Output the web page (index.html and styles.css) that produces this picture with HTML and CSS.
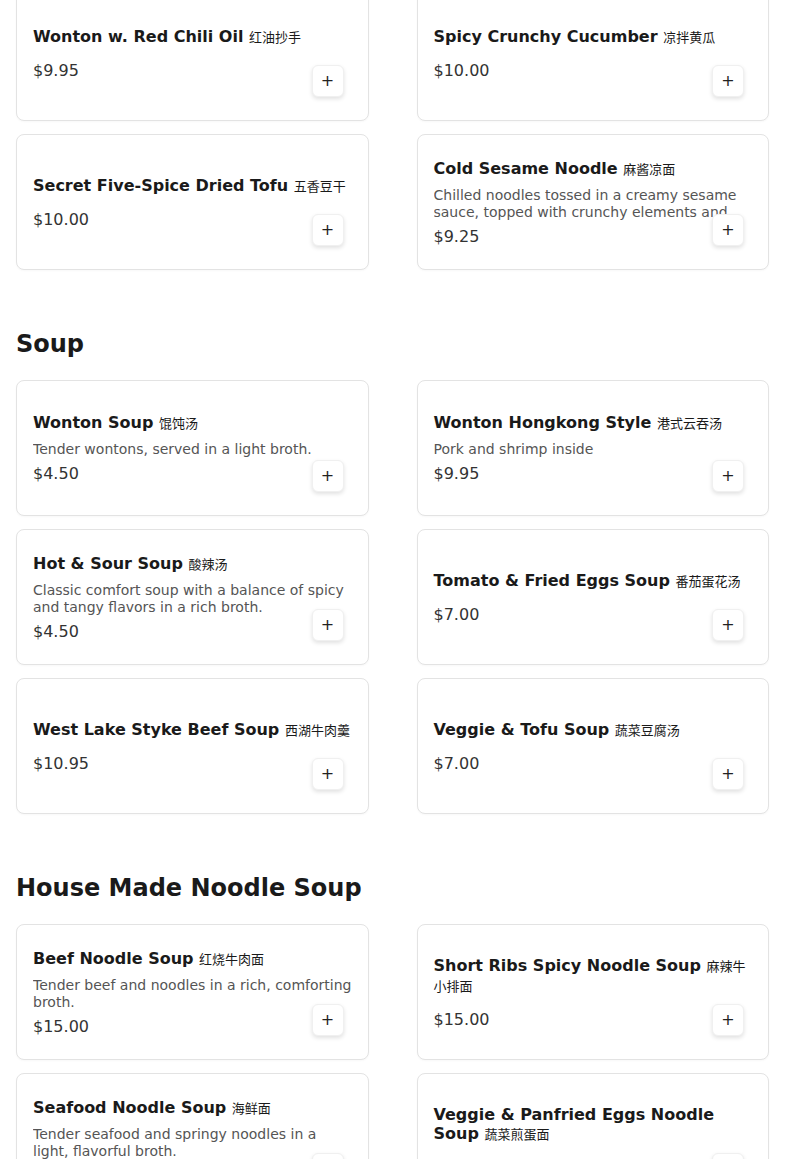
FILE: index.html
```html
<!DOCTYPE html>
<html lang="en">
<head>
    <meta charset="UTF-8">
    <meta name="viewport" content="width=device-width, initial-scale=1.0">
    <title>Menu</title>
    <link rel="stylesheet" href="styles.css">
</head>
<body>
    <main class="menu">
        <section class="menu-section">
            <div class="item-grid">
                <div class="item-card">
                    <div class="item-info">
                        <h3 class="item-name">Wonton w. Red Chili Oil <span class="name-cn">红油抄手</span></h3>
                        <p class="item-price">$9.95</p>
                    </div>
                    <button class="btn-add">+</button>
                </div>
                <div class="item-card">
                    <div class="item-info">
                        <h3 class="item-name">Spicy Crunchy Cucumber <span class="name-cn">凉拌黄瓜</span></h3>
                        <p class="item-price">$10.00</p>
                    </div>
                    <button class="btn-add">+</button>
                </div>
                <div class="item-card">
                    <div class="item-info">
                        <h3 class="item-name">Secret Five-Spice Dried Tofu <span class="name-cn">五香豆干</span></h3>
                        <p class="item-price">$10.00</p>
                    </div>
                    <button class="btn-add">+</button>
                </div>
                <div class="item-card">
                    <div class="item-info">
                        <h3 class="item-name">Cold Sesame Noodle <span class="name-cn">麻酱凉面</span></h3>
                        <p class="item-desc">Chilled noodles tossed in a creamy sesame sauce, topped with crunchy elements and fresh cucumber.</p>
                        <p class="item-price">$9.25</p>
                    </div>
                    <button class="btn-add">+</button>
                </div>
            </div>
        </section>

        <section class="menu-section">
            <h2 class="section-title">Soup</h2>
            <div class="item-grid">
                <div class="item-card">
                    <div class="item-info">
                        <h3 class="item-name">Wonton Soup <span class="name-cn">馄饨汤</span></h3>
                        <p class="item-desc">Tender wontons, served in a light broth.</p>
                        <p class="item-price">$4.50</p>
                    </div>
                    <button class="btn-add">+</button>
                </div>
                <div class="item-card">
                    <div class="item-info">
                        <h3 class="item-name">Wonton Hongkong Style <span class="name-cn">港式云吞汤</span></h3>
                        <p class="item-desc">Pork and shrimp inside</p>
                        <p class="item-price">$9.95</p>
                    </div>
                    <button class="btn-add">+</button>
                </div>
                <div class="item-card">
                    <div class="item-info">
                        <h3 class="item-name">Hot &amp; Sour Soup <span class="name-cn">酸辣汤</span></h3>
                        <p class="item-desc">Classic comfort soup with a balance of spicy and tangy flavors in a rich broth.</p>
                        <p class="item-price">$4.50</p>
                    </div>
                    <button class="btn-add">+</button>
                </div>
                <div class="item-card">
                    <div class="item-info">
                        <h3 class="item-name">Tomato &amp; Fried Eggs Soup <span class="name-cn">番茄蛋花汤</span></h3>
                        <p class="item-price">$7.00</p>
                    </div>
                    <button class="btn-add">+</button>
                </div>
                <div class="item-card">
                    <div class="item-info">
                        <h3 class="item-name">West Lake Styke Beef Soup <span class="name-cn">西湖牛肉羹</span></h3>
                        <p class="item-price">$10.95</p>
                    </div>
                    <button class="btn-add">+</button>
                </div>
                <div class="item-card">
                    <div class="item-info">
                        <h3 class="item-name">Veggie &amp; Tofu Soup <span class="name-cn">蔬菜豆腐汤</span></h3>
                        <p class="item-price">$7.00</p>
                    </div>
                    <button class="btn-add">+</button>
                </div>
            </div>
        </section>

        <section class="menu-section">
            <h2 class="section-title">House Made Noodle Soup</h2>
            <div class="item-grid">
                <div class="item-card">
                    <div class="item-info">
                        <h3 class="item-name">Beef Noodle Soup <span class="name-cn">红烧牛肉面</span></h3>
                        <p class="item-desc">Tender beef and noodles in a rich, comforting broth.</p>
                        <p class="item-price">$15.00</p>
                    </div>
                    <button class="btn-add">+</button>
                </div>
                <div class="item-card">
                    <div class="item-info">
                        <h3 class="item-name">Short Ribs Spicy Noodle Soup <span class="name-cn">麻辣牛小排面</span></h3>
                        <p class="item-price">$15.00</p>
                    </div>
                    <button class="btn-add">+</button>
                </div>
                <div class="item-card">
                    <div class="item-info">
                        <h3 class="item-name">Seafood Noodle Soup <span class="name-cn">海鲜面</span></h3>
                        <p class="item-desc">Tender seafood and springy noodles in a light, flavorful broth.</p>
                        <p class="item-price">$16.00</p>
                    </div>
                    <button class="btn-add">+</button>
                </div>
                <div class="item-card">
                    <div class="item-info">
                        <h3 class="item-name">Veggie &amp; Panfried Eggs Noodle Soup <span class="name-cn">蔬菜煎蛋面</span></h3>
                        <p class="item-price">$13.00</p>
                    </div>
                    <button class="btn-add">+</button>
                </div>
            </div>
        </section>
    </main>
</body>
</html>
```

FILE: styles.css
```css
body {
    font-family: "DejaVu Sans", "Noto Sans CJK SC", sans-serif;
    background-color: #fff;
    color: #1a1a1a;
    margin: 0;
}
.menu {
    padding: 0 16px 40px;
    margin-top: -15px;
}
.menu-section + .menu-section {
    margin-top: 58px;
}
.section-title {
    font-size: 24px;
    line-height: 32px;
    font-weight: bold;
    margin: 0 0 20px;
    color: #1a1a1a;
}
.item-grid {
    display: grid;
    grid-template-columns: 1fr 1fr;
    column-gap: 48px;
    row-gap: 13px;
}
.item-card {
    position: relative;
    height: 136px;
    box-sizing: border-box;
    border: 1px solid #e3e3e3;
    border-radius: 8px;
    background-color: #fff;
    padding: 3px 16px 0;
    display: flex;
    align-items: center;
    box-shadow: 0 1px 2px rgba(0, 0, 0, 0.03);
}
.item-info {
    width: 100%;
}
.item-name {
    font-size: 16px;
    line-height: 19px;
    font-weight: bold;
    margin: 0;
    color: #1a1a1a;
}
.name-cn {
    font-weight: normal;
    font-size: 13px;
}
.item-desc {
    font-size: 14px;
    line-height: 17px;
    color: #555;
    margin: 8px 0 0;
    max-height: 34px;
    overflow: hidden;
}
.item-price {
    font-size: 16px;
    line-height: 24px;
    color: #333;
    margin: 12px 0 0;
}
.item-desc + .item-price {
    margin-top: 4px;
}
.btn-add {
    position: absolute;
    right: 24px;
    bottom: 23px;
    width: 32px;
    height: 32px;
    padding: 0;
    border: 1px solid #f0f0f0;
    border-radius: 6px;
    background-color: #fff;
    color: #222;
    font-family: "DejaVu Sans", sans-serif;
    font-size: 16px;
    line-height: 1;
    cursor: pointer;
    box-shadow: 0 2px 4px rgba(0, 0, 0, 0.12);
}
```
